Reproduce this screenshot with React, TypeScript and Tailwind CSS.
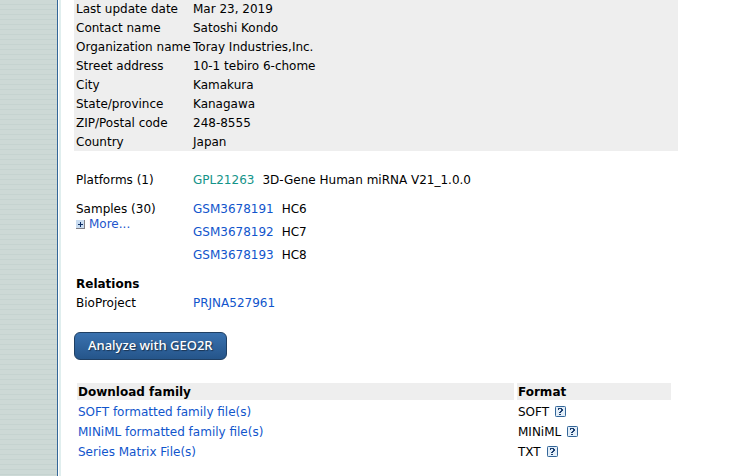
import React from 'react';

const contact = [
  ['Last update date', 'Mar 23, 2019'],
  ['Contact name', 'Satoshi Kondo'],
  ['Organization name', 'Toray Industries,Inc.'],
  ['Street address', '10-1 tebiro 6-chome'],
  ['City', 'Kamakura'],
  ['State/province', 'Kanagawa'],
  ['ZIP/Postal code', '248-8555'],
  ['Country', 'Japan'],
];

const samples = [
  ['GSM3678191', 'HC6'],
  ['GSM3678192', 'HC7'],
  ['GSM3678193', 'HC8'],
];

const downloads = [
  ['SOFT formatted family file(s)', 'SOFT'],
  ['MINiML formatted family file(s)', 'MINiML'],
  ['Series Matrix File(s)', 'TXT'],
];

function PlusIcon() {
  return (
    <svg width="9" height="9" viewBox="0 0 9 9" shapeRendering="crispEdges" aria-hidden="true">
      <rect width="9" height="9" fill="#c9dcf0" />
      <path d="M8 0h1v9H0V8h8z" fill="#7f7f86" />
      <path d="M2 4h5v1H2zM4 2h1v5H4z" fill="#0f2f66" />
    </svg>
  );
}

function HelpIcon() {
  return (
    <svg width="11" height="11" viewBox="0 0 11 11" aria-hidden="true">
      <rect x="0.5" y="0.5" width="10" height="10" rx="0.8" fill="#e3eef8" stroke="#336699" />
      <path d="M3 2h4v1H3zM6 3h2v2H6zM5 5h2v1H5zM4 6h2v1H4zM3 3h1v1H3zM4 8h2v1H4z" fill="#1c3f70" shapeRendering="crispEdges" />
    </svg>
  );
}

export default function App() {
  return (
    <div className="flex min-h-screen overflow-hidden bg-white font-['DejaVu_Sans',sans-serif] text-[12px] leading-[15px] text-black">
      <div className="box-content w-[57px] shrink-0 border-r border-[#336699] bg-[repeating-linear-gradient(to_bottom,#cdd9d6_0px,#cdd9d6_4px,#c5d3d0_4px,#c5d3d0_5px)]" />
      <div className="ml-px w-0.5 shrink-0 bg-[#e0eeee]" />
      <main className="min-w-0 grow pr-16 pl-[13px]">
        <table className="-mt-px w-full table-fixed border-collapse bg-[#eeeeee]">
          <tbody>
            {contact.map(([label, value]) => (
              <tr key={label} className="h-[19px]">
                <td className="w-[117px] whitespace-nowrap pt-0.5 pl-0.5">{label}</td>
                <td className="pt-0.5 pl-0.5">{value}</td>
              </tr>
            ))}
          </tbody>
        </table>

        <table className="mt-5 w-full table-fixed border-collapse">
          <tbody className="align-top">
            <tr className="h-[29px]">
              <td className="w-[117px] pt-0.5 pl-0.5">Platforms (1)</td>
              <td className="pt-0.5 pl-0.5">
                <a href="#gpl21263" className="mr-2 text-[#149389]">GPL21263</a>
                3D-Gene Human miRNA V21_1.0.0
              </td>
            </tr>
            <tr className="h-[75px]">
              <td className="pt-0.5 pl-0.5">
                Samples (30)
                <a href="#more" className="flex items-center gap-1 text-[#2255cc]">
                  <PlusIcon />
                  More...
                </a>
              </td>
              <td className="pt-0.5 pl-0.5">
                <ul className="flex flex-col gap-2">
                  {samples.map(([id, name]) => (
                    <li key={id} className="flex gap-2">
                      <a href={`#${id}`} className="text-[#1155cc]">{id}</a>
                      {name}
                    </li>
                  ))}
                </ul>
              </td>
            </tr>
            <tr className="h-[19px]">
              <th colSpan={2} className="pt-0.5 pl-0.5 text-left font-bold">Relations</th>
            </tr>
            <tr className="h-[19px]">
              <td className="pt-0.5 pl-0.5">BioProject</td>
              <td className="pt-0.5 pl-0.5">
                <a href="#PRJNA527961" className="text-[#1155cc]">PRJNA527961</a>
              </td>
            </tr>
          </tbody>
        </table>

        <button
          type="button"
          className="mt-[19px] block h-7 rounded-md border border-[#1f3f63] bg-linear-to-b from-[#3a72b0] to-[#25558a] px-[13px] pb-0.5 font-['Noto_Sans',sans-serif] text-[13px] font-medium text-white [text-shadow:1px_1px_1px_#1a3350]"
        >
          Analyze with GEO2R
        </button>

        <div className="mt-5 pr-1">
          <table className="w-full table-fixed border-separate border-spacing-[3px]">
            <thead>
              <tr className="h-[17px] text-left">
                <th className="bg-[#eeeeee] pt-0.5 pl-px font-bold">Download family</th>
                <th className="w-[154px] bg-[#eeeeee] pt-0.5 pl-px font-bold">Format</th>
              </tr>
            </thead>
            <tbody>
              {downloads.map(([file, format]) => (
                <tr key={format} className="h-[17px]">
                  <td className="pt-0.5 pl-px">
                    <a href={`#${format}`} className="text-[#1155cc]">{file}</a>
                  </td>
                  <td className="pt-0.5 pl-px">
                    <span className="flex items-center gap-1.5">
                      {format}
                      <a href={`#help-${format}`} aria-label={`${format} help`} className="pb-[3px]">
                        <HelpIcon />
                      </a>
                    </span>
                  </td>
                </tr>
              ))}
            </tbody>
          </table>
        </div>
      </main>
    </div>
  );
}
